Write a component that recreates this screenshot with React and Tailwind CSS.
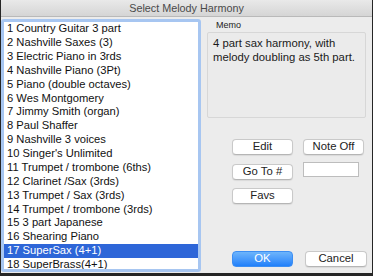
import React from "react";

const items = [
  "1 Country Guitar 3 part",
  "2 Nashville Saxes (3)",
  "3 Electric Piano in 3rds",
  "4 Nashville Piano (3Pt)",
  "5 Piano (double octaves)",
  "6 Wes Montgomery",
  "7 Jimmy Smith (organ)",
  "8 Paul Shaffer",
  "9 Nashville 3 voices",
  "10 Singer's Unlimited",
  "11 Trumpet / trombone (6ths)",
  "12 Clarinet /Sax (3rds)",
  "13 Trumpet / Sax (3rds)",
  "14 Trumpet / trombone (3rds)",
  "15 3 part Japanese",
  "16 Shearing Piano",
  "17 SuperSax (4+1)",
  "18 SuperBrass(4+1)",
];

const font = { fontFamily: '"Liberation Sans", Arial, sans-serif' };

function Btn({ children, className = "" }) {
  return (
    <div
      className={
        "h-[16px] flex items-center justify-center rounded-[4px] bg-white border border-[#c9c9c9] border-b-[#b5b5b5] shadow-[0_1px_1px_rgba(0,0,0,0.08)] text-[11.3px] text-[#222] leading-none " +
        className
      }
    >
      {children}
    </div>
  );
}

export default function App() {
  return (
    <div
      className="w-[373px] h-[276px] flex flex-col bg-[#ececec] border-l border-r border-b-[3px] border-[#262626] overflow-hidden"
      style={font}
    >
      <div className="h-[17px] shrink-0 flex items-center justify-center bg-gradient-to-b from-[#e9e9e9] to-[#d5d5d5] border-b border-[#b9b9b9] text-[10.8px] text-[#4a4a4a]">
        Select Melody Harmony
      </div>
      <div className="flex flex-1 min-h-0">
        <div className="mt-[2px] w-[200px] h-[253px] shrink-0 border-[3px] border-[#a7c6f1] rounded-[3px] bg-white overflow-hidden">
          {items.map((t, i) => (
            <div
              key={i}
              className={
                "h-[13.86px] flex items-center pl-[3px] text-[11.2px] leading-none whitespace-nowrap " +
                (i === 16 ? "bg-[#2e66d8] text-white" : "text-[#111]")
              }
            >
              {t}
            </div>
          ))}
        </div>
        <div className="ml-[6px] w-[160px] flex flex-col pb-[6px]">
          <div className="mt-[3px] h-[12px] pl-[9px] flex items-center text-[9px] text-[#222]">
            Memo
          </div>
          <div className="h-[86px] w-[159px] bg-[#ebebeb] border border-[#d7d7d7] rounded-[2px] pl-[5px] pt-[4px] text-[11.3px] leading-[13.5px] text-[#1a1a1a]">
            4 part sax harmony, with
            <br />
            melody doubling as 5th part.
          </div>
          <div className="mt-[21px] flex pl-[25px] gap-[10px]">
            <Btn className="w-[61px]">Edit</Btn>
            <Btn className="w-[61px]">Note Off</Btn>
          </div>
          <div className="mt-[7px] flex items-start pl-[25px] gap-[10px]">
            <Btn className="w-[61px] mt-[2px]">Go To #</Btn>
            <div className="w-[56px] h-[15px] bg-white border border-[#bdbdbd]" />
          </div>
          <div className="mt-[8px] flex pl-[25px]">
            <Btn className="w-[61px]">Favs</Btn>
          </div>
          <div className="mt-auto flex pl-[25px] gap-[12px]">
            <div className="w-[61px] h-[16px] flex items-center justify-center rounded-[4px] bg-gradient-to-b from-[#6db4fb] to-[#1f80fa] border border-[#3c8ef3] text-[11.3px] text-white leading-none">
              OK
            </div>
            <Btn className="w-[62px]">Cancel</Btn>
          </div>
        </div>
      </div>
    </div>
  );
}
